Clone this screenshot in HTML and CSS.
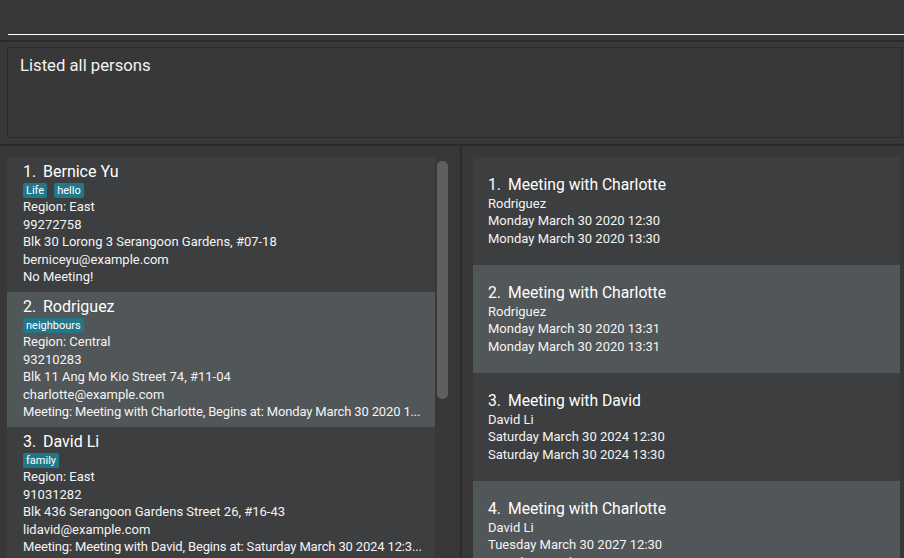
FILE: index.html
```html
<!DOCTYPE html>
<html>
<head>
<meta charset="utf-8">
<link rel="stylesheet" href="styles.css">
</head>
<body>
<div class="app">
  <div class="command-pane"><div class="command-field"></div></div>
  <div class="result-pane"><div class="result-box">Listed all persons</div></div>
  <div class="lists">
    <div class="person-pane">
      <div class="person-list">
        <div class="card person even">
          <div class="title"><span class="idx">1.</span><span class="name">Bernice Yu</span></div>
          <div class="tags"><span class="tag">Life</span><span class="tag">hello</span></div>
          <div class="line">Region: East</div>
          <div class="line">99272758</div>
          <div class="line">Blk 30 Lorong 3 Serangoon Gardens, #07-18</div>
          <div class="line">berniceyu@example.com</div>
          <div class="line">No Meeting!</div>
        </div>
        <div class="card person odd">
          <div class="title"><span class="idx">2.</span><span class="name">Rodriguez</span></div>
          <div class="tags"><span class="tag">neighbours</span></div>
          <div class="line">Region: Central</div>
          <div class="line">93210283</div>
          <div class="line">Blk 11 Ang Mo Kio Street 74, #11-04</div>
          <div class="line">charlotte@example.com</div>
          <div class="line meeting-info">Meeting: Meeting with Charlotte, Begins at: Monday March 30 2020 1...</div>
        </div>
        <div class="card person even">
          <div class="title"><span class="idx">3.</span><span class="name">David Li</span></div>
          <div class="tags"><span class="tag">family</span></div>
          <div class="line">Region: East</div>
          <div class="line">91031282</div>
          <div class="line">Blk 436 Serangoon Gardens Street 26, #16-43</div>
          <div class="line">lidavid@example.com</div>
          <div class="line meeting-info">Meeting: Meeting with David, Begins at: Saturday March 30 2024 12:3...</div>
        </div>
      </div>
      <div class="scrollbar"><div class="thumb"></div></div>
    </div>
    <div class="meeting-pane">
      <div class="card meeting even">
        <div class="title"><span class="idx">1.</span><span class="name">Meeting with Charlotte</span></div>
        <div class="line">Rodriguez</div>
        <div class="line">Monday March 30 2020 12:30</div>
        <div class="line">Monday March 30 2020 13:30</div>
      </div>
      <div class="card meeting odd">
        <div class="title"><span class="idx">2.</span><span class="name">Meeting with Charlotte</span></div>
        <div class="line">Rodriguez</div>
        <div class="line">Monday March 30 2020 13:31</div>
        <div class="line">Monday March 30 2020 13:31</div>
      </div>
      <div class="card meeting even">
        <div class="title"><span class="idx">3.</span><span class="name">Meeting with David</span></div>
        <div class="line">David Li</div>
        <div class="line">Saturday March 30 2024 12:30</div>
        <div class="line">Saturday March 30 2024 13:30</div>
      </div>
      <div class="card meeting odd">
        <div class="title"><span class="idx">4.</span><span class="name">Meeting with Charlotte</span></div>
        <div class="line">David Li</div>
        <div class="line">Tuesday March 30 2027 12:30</div>
        <div class="line">Tuesday March 30 2027 13:30</div>
      </div>
    </div>
  </div>
</div>
</body>
</html>
```

FILE: styles.css
```css
html, body {
  margin: 0;
  padding: 0;
}
body {
  background: #383838;
  color: #ffffff;
  font-family: Roboto, "Noto Sans", sans-serif;
}
.app {
  width: 904px;
  height: 558px;
  overflow: hidden;
  display: flex;
  flex-direction: column;
}
.command-pane {
  height: 42px;
  box-sizing: border-box;
  padding-left: 8px;
  border-bottom: 2px solid #2b2b2b;
  flex-shrink: 0;
}
.command-field {
  height: 35px;
  box-sizing: border-box;
  border-bottom: 1px solid #ffffff;
}
.result-pane {
  padding: 5px 2px 6px 7px;
  border-bottom: 2px solid #2b2b2b;
  flex-shrink: 0;
}
.result-box {
  height: 91px;
  box-sizing: border-box;
  border: 1px solid #2b2b2b;
  padding: 7px 12px;
  font-size: 16.7px;
  line-height: 21px;
  color: #f2f2f2;
}
.lists {
  flex: 1;
  min-height: 0;
  display: flex;
}
.person-pane {
  width: 460px;
  flex-shrink: 0;
  box-sizing: border-box;
  padding: 11px 0 0 7px;
  display: flex;
  gap: 2px;
}
.person-list {
  width: 428px;
  flex-shrink: 0;
}
.scrollbar {
  width: 11px;
  padding-top: 4px;
}
.thumb {
  height: 238px;
  background: #5f5f5f;
  border-radius: 5px;
}
.meeting-pane {
  flex: 1;
  border-left: 2px solid #2b2b2b;
  padding: 11px 4px 0 11px;
}
.card {
  box-sizing: border-box;
  overflow: hidden;
}
.even {
  background: #3c3e3f;
}
.odd {
  background: #515658;
}
.person {
  height: 135px;
  padding: 5px 16px 6px 16px;
}
.meeting {
  height: 108px;
  padding: 18px 15px;
}
.title {
  display: flex;
  font-size: 16px;
  line-height: 20px;
  height: 20px;
  white-space: nowrap;
}
.meeting .title {
  font-size: 15.7px;
}
.idx {
  width: 20px;
  flex-shrink: 0;
}
.tags {
  display: flex;
  gap: 7px;
  margin-top: 1px;
  height: 15px;
}
.tag {
  background: #23778b;
  font-size: 11px;
  line-height: 15px;
  padding: 0 3px;
  border-radius: 2px;
}
.line {
  font-size: 13px;
  line-height: 17.5px;
  white-space: nowrap;
  color: #f4f4f4;
}
.meeting .line {
  line-height: 17.3px;
}
.meeting-info {
  letter-spacing: -0.15px;
}
```
